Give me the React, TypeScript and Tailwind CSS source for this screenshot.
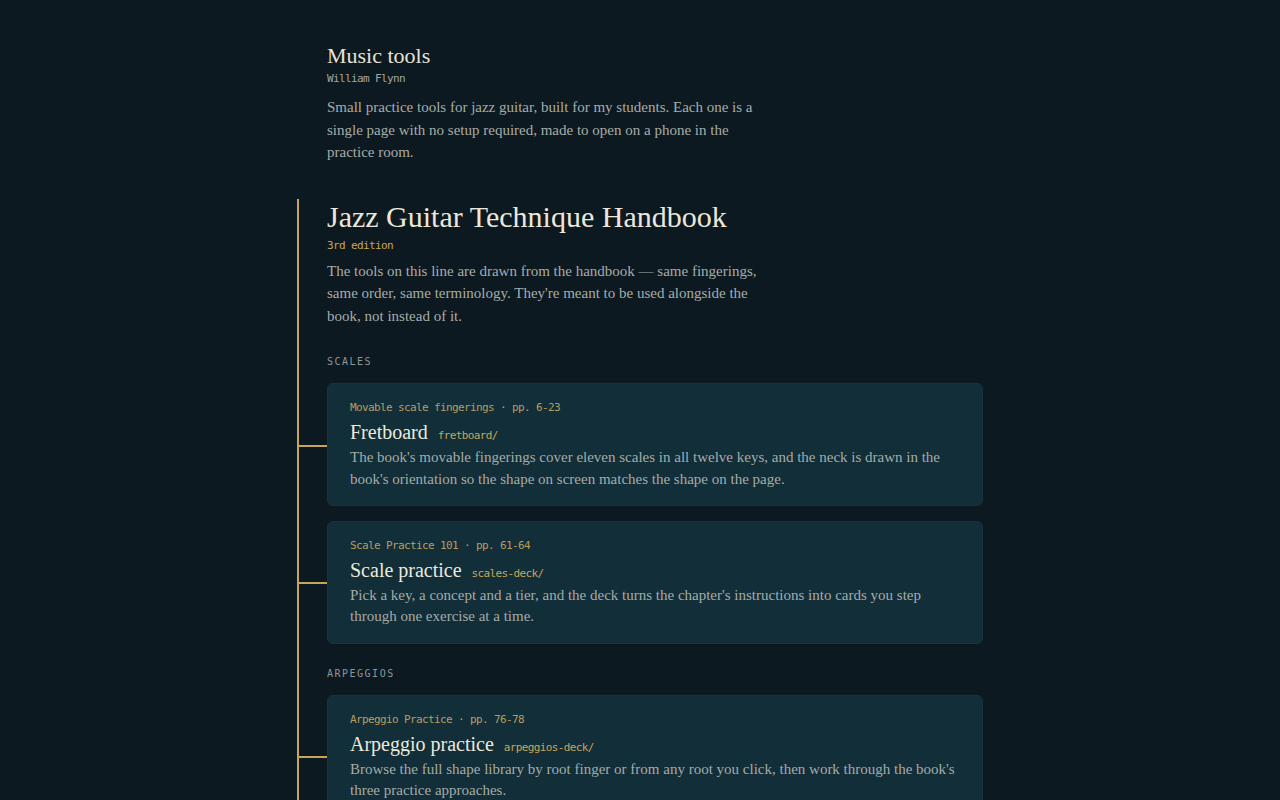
import React from "react";

type Tool = { meta: string; title: string; path: string; body: string };

const groups: { label: string; tools: Tool[] }[] = [
  {
    label: "Scales",
    tools: [
      {
        meta: "Movable scale fingerings · pp. 6-23",
        title: "Fretboard",
        path: "fretboard/",
        body:
          "The book's movable fingerings cover eleven scales in all twelve keys, and the neck is drawn in the book's orientation so the shape on screen matches the shape on the page.",
      },
      {
        meta: "Scale Practice 101 · pp. 61-64",
        title: "Scale practice",
        path: "scales-deck/",
        body:
          "Pick a key, a concept and a tier, and the deck turns the chapter's instructions into cards you step through one exercise at a time.",
      },
    ],
  },
  {
    label: "Arpeggios",
    tools: [
      {
        meta: "Arpeggio Practice · pp. 76-78",
        title: "Arpeggio practice",
        path: "arpeggios-deck/",
        body:
          "Browse the full shape library by root finger or from any root you click, then work through the book's three practice approaches.",
      },
    ],
  },
];

function Card({ t }: { t: Tool }) {
  return (
    <div className="relative rounded-[6px] bg-[#112e39] border border-[#143440] px-[22px] pt-[16px] pb-[15px]">
      <div className="absolute left-[-29px] top-1/2 h-[2px] w-[28px] bg-[#c9a55a]" />
      <div className="font-['DejaVu_Sans_Mono','Liberation_Mono',monospace] text-[11px] leading-[16px] tracking-[-0.62px] text-[#b99d5f]">
        {t.meta}
      </div>
      <div className="mt-[3px] flex items-baseline gap-[10px]">
        <span className="font-['Liberation_Serif','Times_New_Roman',serif] text-[20px] leading-[26px] text-[#eee9dc]">
          {t.title}
        </span>
        <span className="font-['DejaVu_Sans_Mono','Liberation_Mono',monospace] text-[11px] tracking-[-0.62px] text-[#c9a55a]">
          {t.path}
        </span>
      </div>
      <p className="mt-[2px] font-['Liberation_Serif','Times_New_Roman',serif] text-[15px] leading-[21.5px] text-[#a6aba7]">
        {t.body}
      </p>
    </div>
  );
}

export default function App() {
  return (
    <div className="min-h-[800px] bg-[#0c1920] overflow-hidden">
      <div className="mx-auto w-[688px]">
        <header className="pt-[42px] pl-[31px]">
          <h1 className="font-['Liberation_Serif','Times_New_Roman',serif] text-[22px] leading-[28px] text-[#e6e2d6]">
            Music tools
          </h1>
          <div className="mt-[1px] font-['DejaVu_Sans_Mono','Liberation_Mono',monospace] text-[11px] leading-[16px] tracking-[-0.62px] text-[#a3a7a4]">
            William Flynn
          </div>
          <p className="mt-[9px] max-w-[448px] font-['Liberation_Serif','Times_New_Roman',serif] text-[15px] leading-[22.5px] text-[#a8aca8]">
            Small practice tools for jazz guitar, built for my students. Each one is a single page with no setup
            required, made to open on a phone in the practice room.
          </p>
        </header>

        <section className="mt-[35px] mx-[1px] border-l-2 border-[#c9a55a] pl-[28px] pb-[40px]">
          <h2 className="font-['Liberation_Serif','Times_New_Roman',serif] text-[30px] leading-[36px] text-[#ece7da]">
            Jazz Guitar Technique Handbook
          </h2>
          <div className="mt-[3px] font-['DejaVu_Sans_Mono','Liberation_Mono',monospace] text-[11px] leading-[16px] tracking-[-0.62px] text-[#c9a55a]">
            3rd edition
          </div>
          <p className="mt-[6px] max-w-[448px] font-['Liberation_Serif','Times_New_Roman',serif] text-[15px] leading-[22.5px] text-[#a8aca8]">
            The tools on this line are drawn from the handbook — same fingerings, same order, same terminology.
            They're meant to be used alongside the book, not instead of it.
          </p>

          {groups.map((g, gi) => (
            <div key={g.label} className={gi === 0 ? "mt-[27px]" : "mt-[22px]"}>
              <div className="font-['DejaVu_Sans_Mono','Liberation_Mono',monospace] text-[10px] leading-[16px] uppercase tracking-[1.5px] text-[#8e979a]">
                {g.label}
              </div>
              <div className="mt-[13px] flex flex-col gap-[14.5px]">
                {g.tools.map((t) => (
                  <Card key={t.title} t={t} />
                ))}
              </div>
            </div>
          ))}
        </section>
      </div>
    </div>
  );
}
